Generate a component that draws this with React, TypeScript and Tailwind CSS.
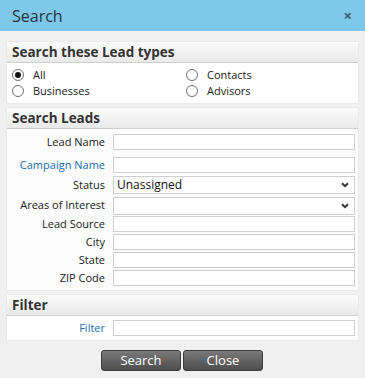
import React from "react";

const font = { fontFamily: '"Open Sans", "Noto Sans", sans-serif' };

function Chevron() {
  return (
    <svg width="8" height="6" viewBox="0 0 8 6" className="absolute right-[5px] top-1/2 -translate-y-1/2">
      <path d="M1 1.2 L4 4.2 L7 1.2" fill="none" stroke="#333" strokeWidth="2" />
    </svg>
  );
}

function Radio({ checked, label }: { checked?: boolean; label: string }) {
  return (
    <div className="flex items-center h-[16px]">
      <span className="w-[12px] h-[12px] rounded-full border border-[#6f6f6f] bg-white flex items-center justify-center ml-[5px]">
        {checked && <span className="w-[6px] h-[6px] rounded-full bg-[#111]" />}
      </span>
      <span className="ml-[9px] text-[11px] text-[#222]">{label}</span>
    </div>
  );
}

function Header({ title }: { title: string }) {
  return (
    <div className="h-[21px] flex items-center px-[5px] bg-gradient-to-b from-[#fbfbfb] to-[#e9e9e9] border-b border-[#cfcfcf] text-[13.5px] font-bold text-[#333]">
      {title}
    </div>
  );
}

function Row({
  label,
  blue,
  h,
  mt,
  select,
  value,
}: {
  label: string;
  blue?: boolean;
  h: string;
  mt?: string;
  select?: boolean;
  value?: string;
}) {
  return (
    <div className={`flex items-center ${h} ${mt ?? ""}`}>
      <div className={`w-[98px] text-right text-[11px] ${blue ? "text-[#1c6db0]" : "text-[#222]"}`}>{label}</div>
      <div
        className={`relative ml-[8px] w-[242px] ${select ? "h-[18px]" : "h-[16px]"} bg-white border border-[#cfcfcf] flex items-center px-[3px] text-[12px] text-[#111]`}
      >
        {value}
        {select && <Chevron />}
      </div>
    </div>
  );
}

export default function App() {
  return (
    <div className="w-[365px] h-[378px] bg-[#f0f0f0] overflow-hidden" style={font}>
      <div className="h-[31px] bg-[#7dc8ea] flex items-center justify-between pl-[12px] pr-[13px]">
        <span className="text-[16px] text-[#26343c]">Search</span>
        <span className="text-[15px] font-bold text-[#3f5a6c] leading-none">×</span>
      </div>
      <div className="px-[7px] pt-[11px]">
        <div className="bg-white shadow-[0_0_1px_rgba(0,0,0,0.15)]">
          <Header title="Search these Lead types" />
          <div className="grid grid-cols-[174px_1fr] pt-[4px] pb-[4px] gap-y-[0px]">
            <Radio checked label="All" />
            <Radio label="Contacts" />
            <Radio label="Businesses" />
            <Radio label="Advisors" />
          </div>
        </div>
        <div className="mt-[5px] bg-[#fbfbfb] shadow-[0_0_1px_rgba(0,0,0,0.15)]">
          <Header title="Search Leads" />
          <div className="pt-[4px] pb-[3px]">
            <Row label="Lead Name" h="h-[18px]" />
            <Row label="Campaign Name" blue h="h-[18px]" mt="mt-[5px]" />
            <Row label="Status" h="h-[20px]" mt="mt-[1px]" select value="Unassigned" />
            <Row label="Areas of Interest" h="h-[19px]" mt="mt-[1px]" select />
            <Row label="Lead Source" h="h-[18px]" />
            <Row label="City" h="h-[18px]" />
            <Row label="State" h="h-[18px]" />
            <Row label="ZIP Code" h="h-[18px]" />
          </div>
        </div>
        <div className="mt-[5px] bg-white shadow-[0_0_1px_rgba(0,0,0,0.15)]">
          <Header title="Filter" />
          <div className="pt-[4px] pb-[4px]">
            <Row label="Filter" blue h="h-[16px]" />
          </div>
        </div>
        <div className="flex justify-center gap-[2px] mt-[10px] ml-[-1px]">
          <button className="w-[80px] h-[21px] rounded-[3px] bg-gradient-to-b from-[#7a7a7a] to-[#4d4d4d] border border-[#3d3d3d] text-white text-[13px] leading-none" style={font}>
            Search
          </button>
          <button className="w-[80px] h-[21px] rounded-[3px] bg-gradient-to-b from-[#7a7a7a] to-[#4d4d4d] border border-[#3d3d3d] text-white text-[13px] leading-none" style={font}>
            Close
          </button>
        </div>
      </div>
    </div>
  );
}
